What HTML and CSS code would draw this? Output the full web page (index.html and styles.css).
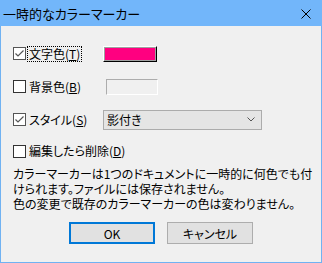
FILE: index.html
```html
<!DOCTYPE html>
<html lang="ja">
<head>
    <meta charset="UTF-8">
    <title>一時的なカラーマーカー</title>
    <link rel="stylesheet" href="styles.css">
</head>
<body>
    <div class="dialog">
        <div class="titlebar">
            <span class="title">一時的なカラーマーカー</span>
            <svg class="close" width="10" height="10" viewBox="0 0 10 10">
                <path d="M0.5 0.5 L9.5 9.5 M9.5 0.5 L0.5 9.5" stroke="#000" stroke-width="1" fill="none"/>
            </svg>
        </div>

        <div class="content">
            <div class="row">
                <label class="check">
                    <span class="box on">
                        <svg width="11" height="11" viewBox="0 0 11 11"><path d="M1.5 5.5 L4 8 L9.5 2.5" stroke="#555" stroke-width="1.2" fill="none"/></svg>
                    </span>
                    <span class="text focus">文字色(<u>T</u>)</span>
                </label>
                <div class="swatch"></div>
            </div>

            <div class="row">
                <label class="check">
                    <span class="box"></span>
                    <span class="text">背景色(<u>B</u>)</span>
                </label>
                <div class="swatch off"></div>
            </div>

            <div class="row">
                <label class="check">
                    <span class="box on">
                        <svg width="11" height="11" viewBox="0 0 11 11"><path d="M1.5 5.5 L4 8 L9.5 2.5" stroke="#555" stroke-width="1.2" fill="none"/></svg>
                    </span>
                    <span class="text">スタイル(<u>S</u>)</span>
                </label>
                <div class="combo">
                    <span>影付き</span>
                    <svg width="8" height="5" viewBox="0 0 8 5"><path d="M0.5 0.5 L4 4 L7.5 0.5" stroke="#555" stroke-width="1" fill="none"/></svg>
                </div>
            </div>

            <div class="row last">
                <label class="check">
                    <span class="box"></span>
                    <span class="text">編集したら削除(<u>D</u>)</span>
                </label>
            </div>

            <p class="note">カラーマーカーは1つのドキュメントに一時的に何色でも付けられます。ファイルには保存されません。<br>色の変更で既存のカラーマーカーの色は変わりません。</p>

            <div class="buttons">
                <button class="btn default">OK</button>
                <button class="btn">キャンセル</button>
            </div>
        </div>
    </div>
</body>
</html>
```

FILE: styles.css
```css
:root {
    --title: #72b6fa;
    --frame: #70b2f2;
    --face: #f0f0f0;
    --text: #000;
}

* {
    box-sizing: border-box;
    margin: 0;
    padding: 0;
}

body {
    background: var(--face);
    font-family: "Noto Sans CJK JP", "Noto Sans", sans-serif;
    font-size: 12px;
    color: var(--text);
    font-feature-settings: "palt";
}

.dialog {
    width: 322px;
    height: 263px;
    border: 1px solid var(--frame);
    border-top: none;
    background: var(--face);
}

.titlebar {
    height: 26px;
    margin: 0 -1px;
    background: var(--title);
    display: flex;
    align-items: center;
    justify-content: space-between;
    padding: 0 11px 0 3px;
}

.title {
    font-size: 13px;
}

.close {
    display: block;
    margin-top: 1px;
}

.content {
    padding: 11px 0 0 12px;
}

.row {
    height: 33px;
    display: flex;
    align-items: center;
}

.row.last {
    height: 30px;
}

.check {
    width: 90px;
    display: flex;
    align-items: center;
}

.box {
    width: 13px;
    height: 13px;
    border: 1px solid #333;
    background: #fff;
    display: flex;
    align-items: center;
    justify-content: center;
    flex: none;
}

.box.on {
    border-color: #555;
}

.box svg {
    display: block;
}

.text {
    margin-left: 3px;
    line-height: 14px;
    white-space: nowrap;
}

.text u {
    text-underline-offset: 1px;
}

.focus {
    outline: 1px dotted #000;
    outline-offset: 0;
    margin-left: 2px;
    padding: 0 1px;
}

.swatch {
    width: 54px;
    height: 16px;
    background: #ff0080;
    border: 1px solid;
    border-color: #fff #000 #000 #fff;
    box-shadow: inset 1px 1px 0 #a0a0a0, inset -1px -1px 0 #a0a0a0;
}

.swatch.off {
    margin-left: 3px;
    width: 52px;
    background: var(--face);
    border-color: #acacac #fff #fff #acacac;
    box-shadow: none;
}

.combo {
    width: 159px;
    height: 20px;
    border: 1px solid #acacac;
    background: #e5e5e5;
    display: flex;
    align-items: center;
    justify-content: space-between;
    padding: 0 6px 0 3px;
}

.combo svg {
    display: block;
}

.note {
    line-height: 15px;
    padding-right: 8px;
}

.buttons {
    display: flex;
    justify-content: center;
    gap: 12px;
    margin: 11px 0 0 -12px;
}

.btn {
    width: 86px;
    height: 22px;
    border: 1px solid #adadad;
    background: #e1e1e1;
    font-family: inherit;
    font-size: 12px;
    font-feature-settings: "palt";
    color: #000;
}

.btn.default {
    border: 2px solid #0078d7;
}
```
